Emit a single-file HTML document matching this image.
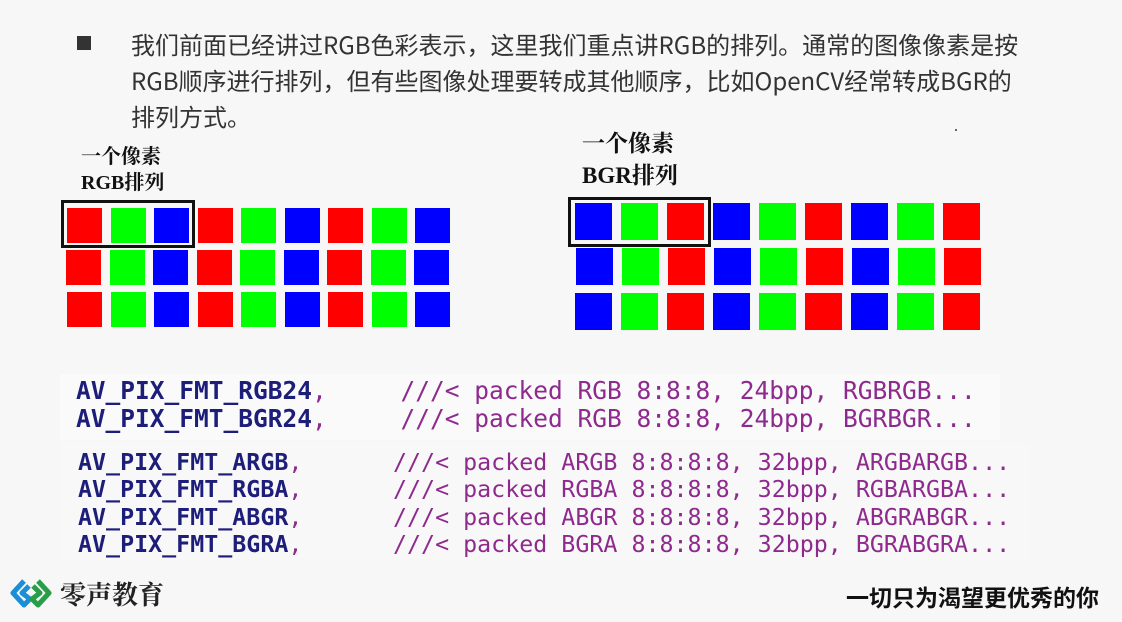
<!DOCTYPE html>
<html><head><meta charset="utf-8"><style>
body{margin:0;width:1122px;height:622px;background:#f7f7f7;position:relative;overflow:hidden;font-family:"Liberation Sans","Noto Sans CJK SC",sans-serif}
.p{position:absolute;left:131px;top:26px;width:1000px;font-size:24px;line-height:36px;color:#333;font-family:"Noto Sans CJK SC",sans-serif;white-space:nowrap}
.bul{position:absolute;left:77px;top:36px;width:14px;height:14px;background:#333}
.sq{position:absolute}
.box{position:absolute;border:3px solid #111;box-sizing:border-box}
.lab{position:absolute;font-family:"Liberation Serif","Noto Serif CJK SC",serif;font-weight:bold;color:#111}
.code{position:absolute;font-family:"DejaVu Sans Mono",monospace;white-space:pre;margin:0}
.id{color:#1d1d7a;font-weight:bold}
.cm{color:#8e2a8e}
.c2{position:absolute;left:393px;font-family:"DejaVu Sans Mono",monospace;white-space:pre;color:#8e2a8e;font-size:23.3px;line-height:27.3px}
</style></head><body>
<div class="bul"></div>
<div class="p">我们前面已经讲过RGB色彩表示，这里我们重点讲RGB的排列。通常的图像像素是按<br>RGB顺序进行排列，但有些图像处理要转成其他顺序，比如OpenCV经常转成BGR的<br>排列方式。</div>

<div class="lab" style="left:81px;top:144px;font-size:20px;line-height:26px">一个像素<br>RGB排列</div>
<div class="lab" style="left:582px;top:128px;font-size:23px;line-height:32px">一个像素<br>BGR排列</div>
<div style="position:absolute;left:955px;top:129px;width:2px;height:2px;background:#666"></div>

<div id="g1"></div><div id="g2"></div>
<div class="box" style="left:61px;top:200px;width:134px;height:48px"></div>
<div class="box" style="left:568px;top:197px;width:143px;height:50px"></div>

<div style="position:absolute;left:60px;top:374px;width:940px;height:66px;background:#fafafa"></div>
<div style="position:absolute;left:60px;top:443px;width:970px;height:116px;background:#f9f8f8"></div>
<div class="code" style="left:76px;top:377px;font-size:24.5px;line-height:28px"><span class="id">AV_PIX_FMT_RGB24</span><span class="cm">,     ///&lt; packed RGB 8:8:8, 24bpp, RGBRGB...</span>
<span class="id">AV_PIX_FMT_BGR24</span><span class="cm">,     ///&lt; packed RGB 8:8:8, 24bpp, BGRBGR...</span></div>
<div class="code" style="left:78px;top:449px;font-size:23.3px;line-height:27.3px"><span class="id">AV_PIX_FMT_ARGB</span><span class="cm">,</span>
<span class="id">AV_PIX_FMT_RGBA</span><span class="cm">,</span>
<span class="id">AV_PIX_FMT_ABGR</span><span class="cm">,</span>
<span class="id">AV_PIX_FMT_BGRA</span><span class="cm">,</span></div>
<div class="c2" style="top:449px">///&lt; packed ARGB 8:8:8:8, 32bpp, ARGBARGB...
///&lt; packed RGBA 8:8:8:8, 32bpp, RGBARGBA...
///&lt; packed ABGR 8:8:8:8, 32bpp, ABGRABGR...
///&lt; packed BGRA 8:8:8:8, 32bpp, BGRABGRA...</div>

<svg style="position:absolute;left:10px;top:578px" width="42" height="30" viewBox="0 0 42 30">
<path d="M14 3 L3 15 L14 27 L20 21 L12 15 L19 8" fill="none" stroke="#1a8fd8" stroke-width="5" stroke-linejoin="round"/>
<path d="M28 3 L39 15 L28 27 L22 21 L30 15 L23 8" fill="none" stroke="#2a9d4a" stroke-width="5" stroke-linejoin="round"/>
</svg>
<div style="position:absolute;left:60px;top:575px;font-size:26px;font-family:'Noto Serif CJK SC',serif;font-weight:bold;color:#222">零声教育</div>
<div style="position:absolute;left:846px;top:579px;font-size:23px;font-weight:bold;font-family:'Noto Sans CJK SC',sans-serif;color:#111">一切只为渴望更优秀的你</div>

<script>
function grid(id,x0,ys,w,h,pitch,cols,dx){var s='';for(var r=0;r<3;r++)for(var c=0;c<9;c++){s+='<div class="sq" style="left:'+(x0+dx[r]+c*pitch)+'px;top:'+ys[r]+'px;width:'+w+'px;height:'+h+'px;background:'+cols[c%3]+'"></div>';}document.getElementById(id).innerHTML=s;}
grid('g1',67,[208,250,292],35,35,43.5,['#ff0000','#00ff00','#0000ff'],[0,-1,0]);
grid('g2',575,[203,248,293],37,37,46,['#0000ff','#00ff00','#ff0000'],[0,1,0]);
</script>
</body></html>
